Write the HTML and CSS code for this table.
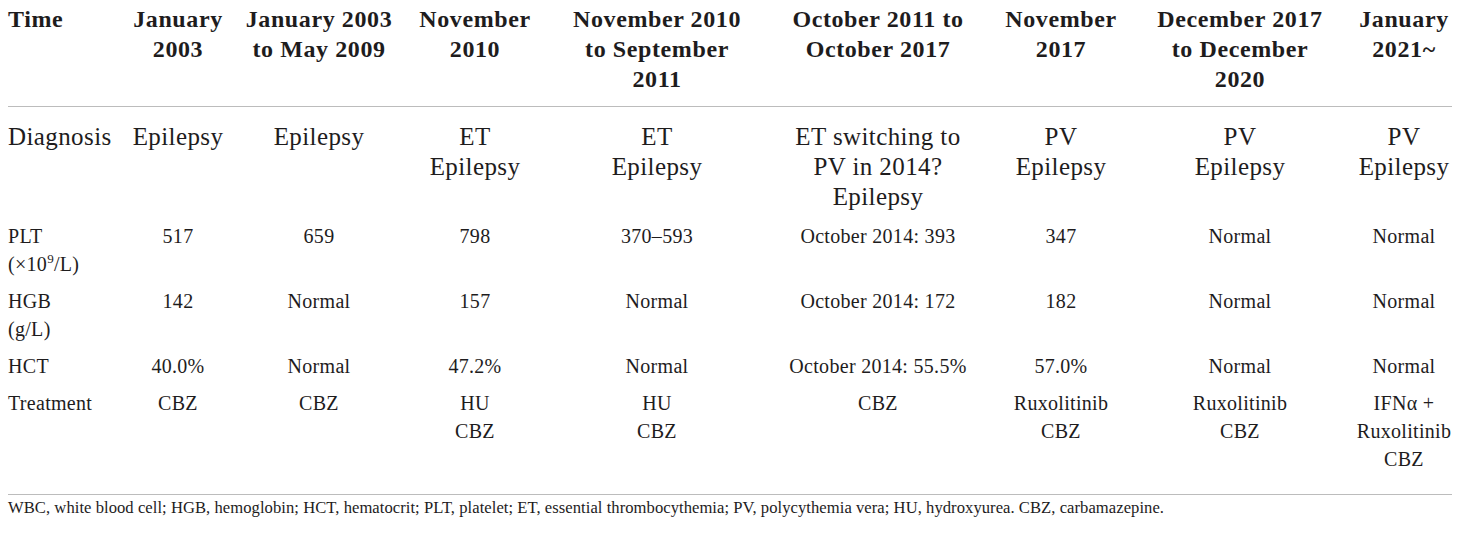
FILE: index.html
```html
<!DOCTYPE html>
<html lang="en">
<head>
    <meta charset="UTF-8">
    <meta name="viewport" content="width=device-width, initial-scale=1.0">
    <title>Patient course table</title>
    <link rel="stylesheet" href="styles.css">
</head>
<body>
    <div class="wrap">
        <table class="course">
            <colgroup>
                <col class="c-label">
                <col class="c-jan03">
                <col class="c-jan03-may09">
                <col class="c-nov10">
                <col class="c-nov10-sep11">
                <col class="c-oct11-oct17">
                <col class="c-nov17">
                <col class="c-dec17-dec20">
                <col class="c-jan21">
            </colgroup>
            <thead>
                <tr>
                    <th>Time</th>
                    <th>January<br>2003</th>
                    <th>January 2003<br>to May 2009</th>
                    <th>November<br>2010</th>
                    <th>November 2010<br>to September<br>2011</th>
                    <th>October 2011 to<br>October 2017</th>
                    <th>November<br>2017</th>
                    <th>December 2017<br>to December<br>2020</th>
                    <th>January<br>2021~</th>
                </tr>
            </thead>
            <tbody>
                <tr class="row-diag">
                    <td>Diagnosis</td>
                    <td>Epilepsy</td>
                    <td>Epilepsy</td>
                    <td>ET<br>Epilepsy</td>
                    <td>ET<br>Epilepsy</td>
                    <td>ET switching to<br>PV in 2014?<br>Epilepsy</td>
                    <td>PV<br>Epilepsy</td>
                    <td>PV<br>Epilepsy</td>
                    <td>PV<br>Epilepsy</td>
                </tr>
                <tr>
                    <td>PLT<br>(×10<sup>9</sup>/L)</td>
                    <td>517</td>
                    <td>659</td>
                    <td>798</td>
                    <td>370–593</td>
                    <td>October 2014: 393</td>
                    <td>347</td>
                    <td>Normal</td>
                    <td>Normal</td>
                </tr>
                <tr>
                    <td>HGB<br>(g/L)</td>
                    <td>142</td>
                    <td>Normal</td>
                    <td>157</td>
                    <td>Normal</td>
                    <td>October 2014: 172</td>
                    <td>182</td>
                    <td>Normal</td>
                    <td>Normal</td>
                </tr>
                <tr>
                    <td>HCT</td>
                    <td>40.0%</td>
                    <td>Normal</td>
                    <td>47.2%</td>
                    <td>Normal</td>
                    <td>October 2014: 55.5%</td>
                    <td>57.0%</td>
                    <td>Normal</td>
                    <td>Normal</td>
                </tr>
                <tr class="row-last">
                    <td>Treatment</td>
                    <td>CBZ</td>
                    <td>CBZ</td>
                    <td>HU<br>CBZ</td>
                    <td>HU<br>CBZ</td>
                    <td>CBZ</td>
                    <td>Ruxolitinib<br>CBZ</td>
                    <td>Ruxolitinib<br>CBZ</td>
                    <td>IFNα +<br>Ruxolitinib<br>CBZ</td>
                </tr>
            </tbody>
        </table>
        <p class="footnote">WBC, white blood cell; HGB, hemoglobin; HCT, hematocrit; PLT, platelet; ET, essential thrombocythemia; PV, polycythemia vera; HU, hydroxyurea. CBZ, carbamazepine.</p>
    </div>
</body>
</html>
```

FILE: styles.css
```css
* {
    margin: 0;
    padding: 0;
    box-sizing: border-box;
}

body {
    font-family: "Liberation Serif", "Times New Roman", serif;
    color: #1e1c1d;
    background: #fff;
}

.wrap {
    padding: 4px 8px 0;
    width: 1460px;
}

.course {
    width: 1444px;
    table-layout: fixed;
    border-collapse: collapse;
}

.c-label { width: 104px; }
.c-jan03 { width: 132px; }
.c-jan03-may09 { width: 150px; }
.c-nov10 { width: 162px; }
.c-nov10-sep11 { width: 202px; }
.c-oct11-oct17 { width: 240px; }
.c-nov17 { width: 126px; }
.c-dec17-dec20 { width: 232px; }
.c-jan21 { width: 96px; }

th,
td {
    text-align: center;
    vertical-align: top;
    white-space: nowrap;
    font-weight: normal;
}

th:first-child,
td:first-child {
    text-align: left;
}

thead th {
    font-weight: bold;
    font-size: 24px;
    line-height: 30px;
    letter-spacing: 0.6px;
    padding-bottom: 12px;
    border-bottom: 1px solid #bcbcbc;
}

tbody td {
    font-size: 20px;
    line-height: 28px;
    letter-spacing: 0.3px;
    padding: 4.5px 0;
}

.row-diag td {
    font-size: 25px;
    line-height: 30px;
    letter-spacing: 0.4px;
    padding: 14.5px 0 5.5px;
}

.row-last td {
    padding-bottom: 21px;
    border-bottom: 1px solid #bcbcbc;
}

sup {
    font-size: 13px;
    line-height: 0;
    vertical-align: 8px;
}

.footnote {
    font-size: 16.6px;
    line-height: 22px;
    letter-spacing: 0.05px;
    padding-top: 2px;
    white-space: nowrap;
}
```
